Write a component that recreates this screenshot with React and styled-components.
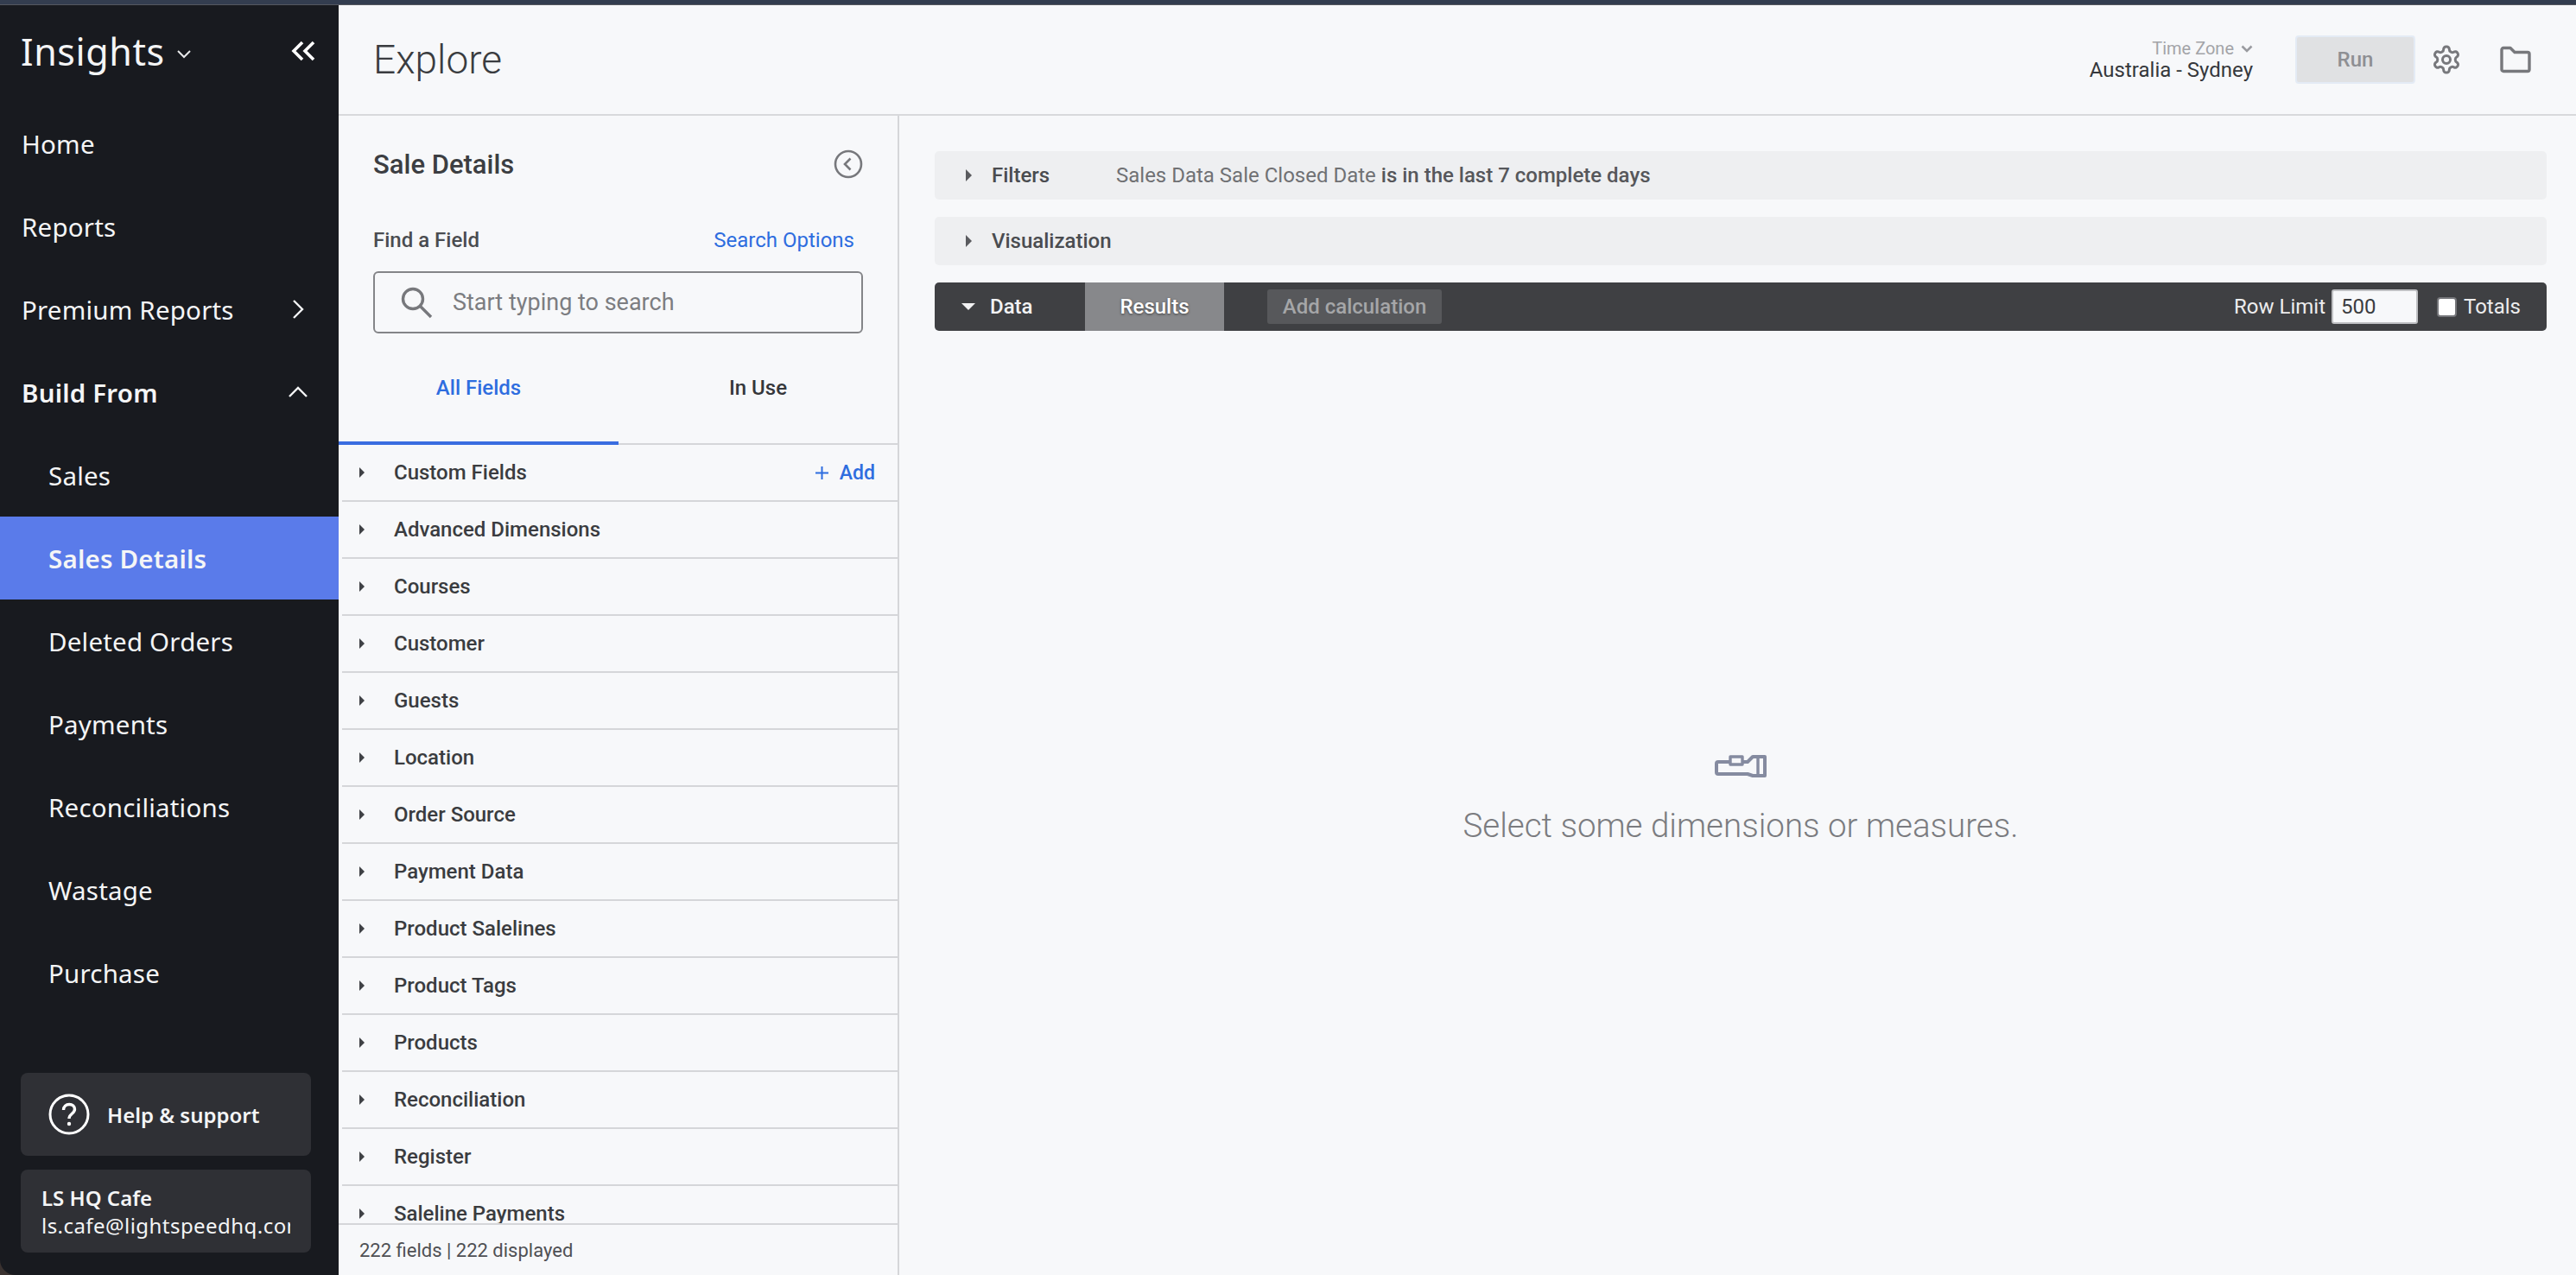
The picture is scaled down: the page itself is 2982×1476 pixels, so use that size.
import React from "react";
import styled, { createGlobalStyle } from "styled-components";

const Global = createGlobalStyle`
  html, body { margin: 0; padding: 0; height: 100%; background: #3a3230; }
  * { box-sizing: border-box; }
  #root { height: 100%; }
`;

const Screen = styled.div`
  height: 100vh; display: flex; flex-direction: column; overflow: hidden;
  font-family: Roboto, "Liberation Sans", sans-serif; background: #3a3230;
`;
const TopStrip = styled.div`
  height: 6px; flex: none; background: #333d4f; border-bottom: 1px solid #55585f;
`;
const Body = styled.div`
  flex: 1; min-height: 0; display: flex;
`;
const Sidebar = styled.aside`
  width: 392px; flex: none; background: #181a1f; color: #f4f5f6; display: flex; flex-direction: column;
  font-family: "Noto Sans", Inter, sans-serif; border-bottom-left-radius: 18px; padding: 0 0 26px;
`;
const Brand = styled.div`
  height: 112px; flex: none; display: flex; align-items: center; padding: 0 24px 6px 24px;
`;
const BrandName = styled.span`
  font-size: 43px; font-weight: 400; letter-spacing: .6px; line-height: 1;
`;
const BrandCaret = styled.svg`
  width: 18px; height: 12px; margin: 8px 0 0 13px;
`;
const Collapse = styled.svg`
  width: 28px; height: 24px; margin-left: auto; margin-right: 3px;
`;
const Nav = styled.nav`
  display: flex; flex-direction: column;
`;
const NavItem = styled.div`
  height: 96px; display: flex; align-items: center; justify-content: space-between;
  padding: 0 ${p => (p.$chev === "up" ? "36px" : "40px")} 0 ${p => (p.$sub ? "56px" : "25px")};
  font-size: 29.5px; font-weight: ${p => (p.$strong || p.$active ? 600 : 400)};
  background: ${p => (p.$active ? "#5a7bea" : "transparent")};
  letter-spacing: .2px;
`;
const Bottom = styled.div`
  margin-top: auto; padding: 0 32px 0 24px; display: flex; flex-direction: column; gap: 16px;
`;
const HelpCard = styled.div`
  height: 96px; border-radius: 8px; background: #2f3035; display: flex; align-items: center;
  padding-left: 32px; gap: 20px; font-size: 24px; font-weight: 600;
`;
const AccountCard = styled.div`
  height: 96px; border-radius: 8px; background: #2f3035; padding: 17px 24px 0; overflow: hidden;
`;
const AccountName = styled.div`
  font-size: 24px; font-weight: 600; line-height: 32px;
`;
const AccountMail = styled.div`
  font-size: 24px; line-height: 32px; overflow: hidden; white-space: nowrap; letter-spacing: .45px;
`;
const Main = styled.div`
  flex: 1; min-width: 0; display: flex; flex-direction: column; background: #f7f8fa;
`;
const Header = styled.header`
  height: 128px; flex: none; display: flex; align-items: center; padding: 0 53px 0 40px;
  border-bottom: 2px solid #d8d9dc;
`;
const Title = styled.h1`
  margin: 0; font-size: 46px; font-weight: 300; color: #3a3c40;
`;
const TimeZone = styled.div`
  margin-left: auto; display: flex; flex-direction: column; align-items: flex-end; margin-right: 49px;
`;
const TzLabel = styled.div`
  font-size: 20px; color: #a3a4a8; line-height: 24px; display: flex; align-items: center; gap: 8px;
`;
const TzValue = styled.div`
  font-size: 24px; color: #36383c; line-height: 26px;
`;
const RunButton = styled.button`
  width: 139px; height: 56px; background: #e0e1e3; border: 2px solid #e4ebf5; border-radius: 4px;
  color: #8e8f93; font: 500 24px Roboto, sans-serif; padding: 0;
`;
const GearIcon = styled.svg`
  width: 36px; height: 36px; margin-left: 18px; color: #77787c;
`;
const FolderIcon = styled.svg`
  width: 38px; height: 34px; margin-left: 43px; margin-right: -2px; color: #77787c;
`;
const Work = styled.div`
  flex: 1; min-height: 0; display: flex;
`;
const FieldPanel = styled.section`
  width: 649px; flex: none; border-right: 2px solid #d5d6d9; display: flex; flex-direction: column;
`;
const PanelHead = styled.div`
  padding: 0 40px; flex: none;
`;
const PanelTitleRow = styled.div`
  height: 88px; padding-top: 24px; display: flex; align-items: center; justify-content: space-between;
`;
const PanelTitle = styled.h2`
  margin: 0; font-size: 31px; font-weight: 500; color: #3c3e42;
`;
const BackIcon = styled.svg`
  width: 34px; height: 34px; margin-right: 0px; margin-top: -1px; color: #77787c;
`;
const FindRow = styled.div`
  height: 56px; margin-top: 28px; margin-right: 10px; display: flex; align-items: center; justify-content: space-between;
  font-size: 24px; color: #4a4c50; font-weight: 500;
`;
const SearchLink = styled.span`
  color: #2e6ddf; font-weight: 400;
`;
const SearchBox = styled.div`
  height: 72px; margin-top: 8px; width: 567px; border: 2px solid #848588; border-radius: 6px;
  display: flex; align-items: center; padding-left: 30px; gap: 23px; color: #7c7d81; font-size: 27px;
`;
const SearchIcon = styled.svg`
  width: 37px; height: 37px; color: #77787c; flex: none;
`;
const Tabs = styled.div`
  display: grid; grid-template-columns: 324px 1fr; height: 129px; flex: none; border-bottom: 2px solid #d5d6d9;
  align-items: stretch;
`;
const Tab = styled.div`
  display: flex; align-items: center; justify-content: center; font-size: 24px; font-weight: 500;
  padding-top: ${p => (p.$active ? "0" : "0")};
  color: ${p => (p.$active ? "#2e6ddf" : "#35373b")};
  border-bottom: 4px solid ${p => (p.$active ? "#3a6de0" : "transparent")};
  margin-bottom: -2px; 
  height: 129px;
`;
const FieldList = styled.div`
  flex: 1; min-height: 0; overflow: hidden; padding-left: 4px;
`;
const Row = styled.div`
  height: 66px; border-bottom: 2px solid #d5d6d9; display: flex; align-items: center;
  padding: 0 26px 0 20px; color: #3a3c40; font-size: 24px; font-weight: 500;
`;
const Caret = styled.i`
  width: 0; height: 0; flex: none; display: block;
  border-left: ${p => (p.$size || 6)}px solid ${p => p.$color || "#3f4145"};
  border-top: ${p => (p.$size || 6)}px solid transparent;
  border-bottom: ${p => (p.$size || 6)}px solid transparent;
  margin-right: ${p => p.$gap || 34}px;
`;
const CaretDown = styled.i`
  width: 0; height: 0; flex: none; display: block;
  border-top: 8px solid #f2f2f3; border-left: 8px solid transparent; border-right: 8px solid transparent;
  margin-right: 17px;
`;
const AddLink = styled.span`
  margin-left: auto; color: #2e6ddf; display: flex; align-items: center; gap: 13px; font-size: 23px;
`;
const PanelFoot = styled.div`
  height: 60px; flex: none; border-top: 2px solid #d5d6d9; padding: 0 24px; display: flex; align-items: center;
  font-size: 22px; color: #4f5054;
`;
const Results = styled.section`
  flex: 1; min-width: 0; padding: 41px 34px 0 41px; display: flex; flex-direction: column;
`;
const Bar = styled.div`
  height: 56px; flex: none; margin-bottom: 20px; background: #eeeff1; border-radius: 5px;
  display: flex; align-items: center; padding-left: 36px; font-size: 24px; color: #4a4c50; font-weight: 500;
`;
const BarLabel = styled.span`
  width: 144px;
`;
const FilterText = styled.span`
  color: #707174; font-weight: 400;
`;
const FilterStrong = styled.span`
  color: #56575b; font-weight: 500;
`;
const DataBar = styled.div`
  height: 56px; flex: none; background: #3f4043; border-radius: 5px; display: flex; align-items: center;
  padding-left: 31px; color: #f2f2f3; font-size: 24px; font-weight: 500;
`;
const DataLabel = styled.span`
  width: 110px;
`;
const ResultsTab = styled.div`
  width: 161px; height: 56px; background: #87888b; color: #fff; display: flex; align-items: center; justify-content: center;
  text-shadow: 0 1px 3px rgba(0,0,0,.55);
`;
const CalcButton = styled.div`
  margin-left: 50px; width: 202px; height: 40px; background: #57585b; border-radius: 3px; color: #a5a6a8;
  display: flex; align-items: center; justify-content: center;
`;
const RowLimit = styled.div`
  margin-left: auto; display: flex; align-items: center; padding-right: 30px; font-weight: 400; color: #ececed;
`;
const LimitInput = styled.div`
  width: 100px; height: 40px; margin-left: 7px; background: #f7f8fa; border: 2px solid #bfc0c3; border-radius: 3px;
  color: #3a3c40; display: flex; align-items: center; padding-left: 9px;
`;
const CheckBox = styled.div`
  width: 23px; height: 23px; margin-left: 22px; margin-right: 8px; background: #fff; border: 2px solid #75767a; border-radius: 4px;
`;
const Empty = styled.div`
  flex: 1; display: flex; flex-direction: column; align-items: center; justify-content: center; padding-bottom: 1px; color: #7b7c80;
`;
const EmptyIcon = styled.svg`
  width: 60px; height: 26px; color: #858ba0;
`;
const EmptyText = styled.div`
  font-size: 38.5px; font-weight: 300; margin-top: 28px; line-height: 56px;
`;

const fields = ["Custom Fields","Advanced Dimensions","Courses","Customer","Guests","Location","Order Source","Payment Data","Product Salelines","Product Tags","Products","Reconciliation","Register","Saleline Payments","Sales Data"];
const nav = [
  { label: "Home" }, { label: "Reports" }, { label: "Premium Reports", chev: "right" },
  { label: "Build From", chev: "up", strong: true },
  { label: "Sales", sub: true }, { label: "Sales Details", sub: true, active: true },
  { label: "Deleted Orders", sub: true }, { label: "Payments", sub: true },
  { label: "Reconciliations", sub: true }, { label: "Wastage", sub: true }, { label: "Purchase", sub: true },
];

const Chev = ({ dir }) => (
  <svg width={dir === "up" ? 22 : 14} height={dir === "up" ? 14 : 24} viewBox={dir === "up" ? "0 0 22 14" : "0 0 14 24"} fill="none" stroke="#f4f5f6" strokeWidth="2.4">
    <path d={dir === "up" ? "M1 12 11 2l10 10" : "M2 2l10 10L2 22"} />
  </svg>
);

export default function App() {
  return (
    <Screen>
      <Global />
      <TopStrip />
      <Body>
        <Sidebar>
          <Brand>
            <BrandName>Insights</BrandName>
            <BrandCaret viewBox="0 0 18 12" fill="none" stroke="#e8e9ea" strokeWidth="2"><path d="M2 2l7 7 7-7" /></BrandCaret>
            <Collapse viewBox="0 0 28 24" fill="none" stroke="#fff" strokeWidth="3.6"><path d="M13 2 3 12l10 10M26 2 16 12l10 10" /></Collapse>
          </Brand>
          <Nav>
            {nav.map(n => (
              <NavItem key={n.label} $sub={n.sub} $active={n.active} $strong={n.strong} $chev={n.chev}>
                <span>{n.label}</span>
                {n.chev && <Chev dir={n.chev} />}
              </NavItem>
            ))}
          </Nav>
          <Bottom>
            <HelpCard>
              <svg width="48" height="48" viewBox="0 0 48 48" fill="none" stroke="#fff" strokeWidth="3">
                <circle cx="24" cy="24" r="22" />
                <path d="M17.5 19c0-4 3-6.5 6.7-6.5s6.3 2.400 6.300 5.600c0 5.400-6.500 5-6.500 10.900" strokeWidth="3.400" />
                <circle cx="24" cy="35" r="2.200" fill="#fff" stroke="none" />
              </svg>
              Help &amp; support
            </HelpCard>
            <AccountCard>
              <AccountName>LS HQ Cafe</AccountName>
              <AccountMail>ls.cafe@lightspeedhq.com</AccountMail>
            </AccountCard>
          </Bottom>
        </Sidebar>
        <Main>
          <Header>
            <Title>Explore</Title>
            <TimeZone>
              <TzLabel>Time Zone
                <svg width="14" height="9" viewBox="0 0 14 9" fill="none" stroke="#9a9ba0" strokeWidth="2.600"><path d="M1.500 1.500 7 7l5.500-5.500" /></svg>
              </TzLabel>
              <TzValue>Australia - Sydney</TzValue>
            </TimeZone>
            <RunButton>Run</RunButton>
            <GearIcon viewBox="0 0 24 24" fill="none" stroke="currentColor" strokeWidth="2" strokeLinejoin="round">
              <path d="M12.220 2h-.440a2 2 0 0 0-2 2v.180a2 2 0 0 1-1 1.730l-.430.250a2 2 0 0 1-2 0l-.150-.080a2 2 0 0 0-2.730.730l-.220.380a2 2 0 0 0 .730 2.730l.150.100a2 2 0 0 1 1 1.720v.510a2 2 0 0 1-1 1.740l-.150.090a2 2 0 0 0-.730 2.730l.220.380a2 2 0 0 0 2.730.730l.150-.080a2 2 0 0 1 2 0l.430.250a2 2 0 0 1 1 1.730V20a2 2 0 0 0 2 2h.440a2 2 0 0 0 2-2v-.180a2 2 0 0 1 1-1.730l.430-.250a2 2 0 0 1 2 0l.150.080a2 2 0 0 0 2.730-.730l.220-.390a2 2 0 0 0-.730-2.730l-.150-.080a2 2 0 0 1-1-1.740v-.500a2 2 0 0 1 1-1.740l.150-.090a2 2 0 0 0 .730-2.730l-.220-.380a2 2 0 0 0-2.730-.730l-.150.080a2 2 0 0 1-2 0l-.430-.250a2 2 0 0 1-1-1.730V4a2 2 0 0 0-2-2z" />
              <circle cx="12" cy="12" r="3" />
            </GearIcon>
            <FolderIcon viewBox="0 0 38 34" fill="none" stroke="currentColor" strokeWidth="3.400" strokeLinejoin="round">
              <path d="M3 5.500a2 2 0 0 1 2-2h8l5 5h15a2 2 0 0 1 2 2v18a2 2 0 0 1-2 2H5a2 2 0 0 1-2-2z" />
            </FolderIcon>
          </Header>
          <Work>
            <FieldPanel>
              <PanelHead>
                <PanelTitleRow>
                  <PanelTitle>Sale Details</PanelTitle>
                  <BackIcon viewBox="0 0 34 34" fill="none" stroke="currentColor" strokeWidth="2.600">
                    <circle cx="17" cy="17" r="15" />
                    <path d="M19.500 10.500 13 17l6.500 6.500" />
                  </BackIcon>
                </PanelTitleRow>
                <FindRow>
                  <span>Find a Field</span>
                  <SearchLink>Search Options</SearchLink>
                </FindRow>
                <SearchBox>
                  <SearchIcon viewBox="0 0 37 37" fill="none" stroke="currentColor" strokeWidth="3.400">
                    <circle cx="14" cy="14" r="11.500" />
                    <path d="m22.500 22.500 12.500 12.500" />
                  </SearchIcon>
                  Start typing to search
                </SearchBox>
              </PanelHead>
              <Tabs>
                <Tab $active>All Fields</Tab>
                <Tab>In Use</Tab>
              </Tabs>
              <FieldList>
                {fields.map((f, i) => (
                  <Row key={f}>
                    <Caret $gap={34} />
                    {f}
                    {i === 0 && (
                      <AddLink>
                        <svg width="15" height="15" viewBox="0 0 15 15" stroke="#2e6ddf" strokeWidth="2"><path d="M7.500 0v15M0 7.500h15" /></svg>
                        Add
                      </AddLink>
                    )}
                  </Row>
                ))}
              </FieldList>
              <PanelFoot>222 fields | 222 displayed</PanelFoot>
            </FieldPanel>
            <Results>
              <Bar>
                <Caret $gap={23} $color="#5a5b5f" $size={7} />
                <BarLabel>Filters</BarLabel>
                <FilterText>Sales Data Sale Closed Date&nbsp;</FilterText>
                <FilterStrong>is in the last 7 complete days</FilterStrong>
              </Bar>
              <Bar>
                <Caret $gap={23} $color="#5a5b5f" $size={7} />
                <span>Visualization</span>
              </Bar>
              <DataBar>
                <CaretDown />
                <DataLabel>Data</DataLabel>
                <ResultsTab>Results</ResultsTab>
                <CalcButton>Add calculation</CalcButton>
                <RowLimit>
                  Row Limit
                  <LimitInput>500</LimitInput>
                  <CheckBox />
                  Totals
                </RowLimit>
              </DataBar>
              <Empty>
                <EmptyIcon viewBox="0 0 60 26" fill="none" stroke="currentColor" strokeWidth="4" strokeLinejoin="round">
                  <path d="M18 8H4a2 2 0 0 0-2 2v10a2 2 0 0 0 2 2h34l6 2h14V2H44l-6 6h-6" />
                  <path d="M18 2h14v9H18zM50 2v22" strokeWidth="3.400" />
                </EmptyIcon>
                <EmptyText>Select some dimensions or measures.</EmptyText>
              </Empty>
            </Results>
          </Work>
        </Main>
      </Body>
    </Screen>
  );
}
